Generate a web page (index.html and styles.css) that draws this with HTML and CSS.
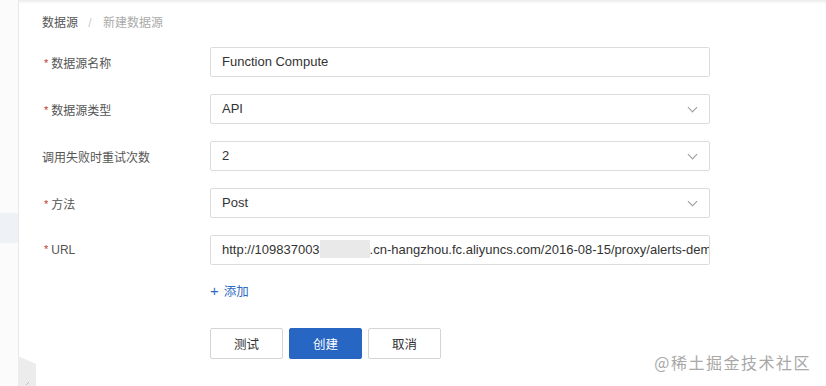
FILE: index.html
```html
<!DOCTYPE html>
<html lang="zh-CN">
<head>
  <meta charset="UTF-8" />
  <title>新建数据源</title>
  <link rel="stylesheet" href="styles.css">
</head>
<body>
  <div class="page">
    <aside class="sidebar">
      <div class="side-item active"></div>
      <svg class="collapse-tab" width="20" height="30" viewBox="0 0 20 30">
        <path d="M0 0 L18 8 L18 30 L0 30 Z" fill="#ececec"/>
        <path d="M11 26 L8 29" stroke="#bbb" stroke-width="1" fill="none"/>
      </svg>
    </aside>

    <main class="content">
      <div class="breadcrumb">
        <span class="crumb">数据源</span>
        <span class="sep">/</span>
        <span class="crumb current">新建数据源</span>
      </div>

      <form class="ds-form">
        <div class="form-row">
          <label class="required">数据源名称</label>
          <div class="field">Function Compute</div>
        </div>
        <div class="form-row">
          <label class="required">数据源类型</label>
          <div class="field select">API<span class="arrow"></span></div>
        </div>
        <div class="form-row">
          <label>调用失败时重试次数</label>
          <div class="field select">2<span class="arrow"></span></div>
        </div>
        <div class="form-row">
          <label class="required">方法</label>
          <div class="field select">Post<span class="arrow"></span></div>
        </div>
        <div class="form-row">
          <label class="required">URL</label>
          <div class="field url">http://109837003<span class="masked"></span>.cn-hangzhou.fc.aliyuncs.com/2016-08-15/proxy/alerts-dem</div>
        </div>

        <div class="add-link"><span class="plus">+</span>添加</div>

        <div class="actions">
          <button type="button" class="btn">测试</button>
          <button type="button" class="btn primary">创建</button>
          <button type="button" class="btn">取消</button>
        </div>
      </form>
    </main>

    <div class="watermark">@稀土掘金技术社区</div>
  </div>
</body>
</html>
```

FILE: styles.css
```css
* {
  margin: 0;
  padding: 0;
  box-sizing: border-box;
  font-family: "Liberation Sans", "Noto Sans CJK SC", sans-serif;
}
body {
  width: 826px;
  height: 386px;
  overflow: hidden;
  background-color: #fff;
}
.page {
  position: relative;
  display: flex;
  height: 386px;
  box-shadow: inset 0 3px 3px -1px rgba(0,0,0,0.08);
}
.sidebar {
  position: relative;
  width: 19px;
  flex-shrink: 0;
  background-color: #fbfbfb;
  border-right: 1px solid #e8e8e8;
}
.side-item.active {
  margin-top: 213px;
  height: 30px;
  background-color: #eef1f6;
}
.collapse-tab {
  position: absolute;
  left: 18px;
  bottom: 0;
}
.content {
  flex: 1;
  padding-left: 23px;
}
.breadcrumb {
  padding-top: 15px;
  font-size: 12px;
  line-height: 16px;
  color: #555;
}
.breadcrumb .sep {
  color: #ccc;
  margin: 0 8px 0 7px;
}
.breadcrumb .current {
  color: #aaa;
}
.ds-form {
  margin-top: 16px;
}
.form-row {
  display: flex;
  align-items: center;
  height: 30px;
  margin-bottom: 17px;
}
.form-row label {
  width: 168px;
  font-size: 12px;
  color: #555;
}
.form-row label.required::before {
  content: "*";
  color: #c0392b;
  margin-right: 5px;
  font-size: 11px;
  position: relative;
  top: -1px;
  left: 2px;
}
.field {
  position: relative;
  width: 500px;
  height: 30px;
  line-height: 28px;
  padding: 0 11px;
  border: 1px solid #dcdcdc;
  border-radius: 2px;
  font-size: 13px;
  color: #333;
  white-space: nowrap;
  overflow: hidden;
}
.field.url {
  padding-right: 0;
}
.masked {
  display: inline-block;
  width: 50px;
  height: 18px;
  vertical-align: -4px;
  background-color: #e9e9e9;
}
.arrow {
  position: absolute;
  right: 13px;
  top: 9px;
  width: 7px;
  height: 7px;
  border-right: 1px solid #999;
  border-bottom: 1px solid #999;
  transform: rotate(45deg);
}
.add-link {
  margin: -1px 0 0 168px;
  height: 20px;
  line-height: 20px;
  font-size: 12.5px;
  color: #2f6bc5;
}
.add-link .plus {
  font-size: 15px;
  margin-right: 5px;
}
.actions {
  display: flex;
  gap: 6px;
  margin: 27px 0 0 168px;
}
.btn {
  width: 73px;
  height: 31px;
  border: 1px solid #d4d4d4;
  border-radius: 2px;
  background-color: #fff;
  color: #333;
  font-size: 12.5px;
  cursor: pointer;
}
.btn.primary {
  background-color: #2866c3;
  border-color: #2866c3;
  color: #fff;
}
.watermark {
  position: absolute;
  right: 15px;
  bottom: 12px;
  font-size: 16px;
  color: #a8a8a8;
  letter-spacing: 1.5px;
  font-family: "Noto Sans CJK SC", sans-serif;
}
```
